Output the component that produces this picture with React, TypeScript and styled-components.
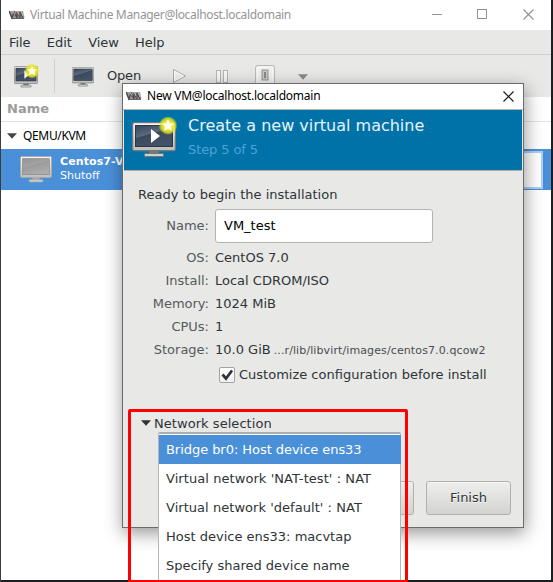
import React from 'react';
import styled, { createGlobalStyle } from 'styled-components';

const Global = createGlobalStyle`
  * { box-sizing: border-box; }
  html, body { margin: 0; padding: 0; overflow: hidden; }
  body { font-family: 'DejaVu Sans', sans-serif; font-size: 13px; color: #2e3436; }
  svg { display: block; flex: none; }
`;

const Desktop = styled.div`
  position: relative;
  width: 553px;
  height: 582px;
  overflow: hidden;
  background: #1c1d20;
  border-left: 1px solid #3b3b40;
  padding: 0 2px 2px 0;
`;

const MainWindow = styled.div`
  height: 580px;
  overflow: hidden;
  background: #fff;
  display: flex;
  flex-direction: column;
`;

const TitleBar = styled.div`
  height: 30px;
  flex: none;
  display: flex;
  align-items: center;
  padding-left: 8px;
  background: #fff;
`;

const Caption = styled.span<{ $color: string; $track: number }>`
  font: 12px/18px 'Noto Sans', sans-serif;
  letter-spacing: ${p => p.$track}px;
  color: ${p => p.$color};
  margin-left: 5px;
  white-space: nowrap;
`;

const WindowControls = styled.div`
  margin-left: auto;
  display: flex;
  gap: 35px;
  padding: 0 17px 2px 0;
`;

const MenuBar = styled.div`
  height: 25px;
  flex: none;
  display: flex;
  gap: 16.3px;
  padding-left: 8px;
  line-height: 25px;
  background: #e8e8e7;
  border-bottom: 1px solid #cfcfcd;
`;

const MenuItem = styled.span`
  letter-spacing: -0.05px;
`;

const ToolBar = styled.div`
  height: 42px;
  flex: none;
  display: flex;
  align-items: flex-start;
  padding-left: 13px;
  background: #e8e8e7;
`;

const ToolSlot = styled.div<{ $left: number; $top: number }>`
  margin-left: ${p => p.$left}px;
  padding-top: ${p => p.$top}px;
`;

const Divider = styled.div`
  width: 1px;
  height: 34px;
  margin: 4px 0 0 14px;
  background: #cdcdcb;
`;

const OpenLabel = styled.span`
  margin-left: 13px;
  line-height: 41px;
  letter-spacing: -0.2px;
`;

const ListHeader = styled.div`
  height: 25px;
  flex: none;
  padding-left: 6px;
  font-weight: bold;
  line-height: 23px;
  color: #9b9b9b;
  border-bottom: 1px solid #e2e2e2;
`;

const GroupRow = styled.div`
  height: 27px;
  flex: none;
  display: flex;
  align-items: center;
  gap: 6px;
  padding-left: 6px;
  color: #000;
  font: 12px/18px 'Noto Sans', sans-serif;
  letter-spacing: -0.35px;
`;

const VmRow = styled.div`
  height: 41px;
  flex: none;
  display: flex;
  align-items: center;
  padding-left: 19px;
  background: #4a90d9;
  color: #fff;
  font-size: 11px;
  line-height: 14px;
`;

const VmText = styled.div`
  margin: -1px 0 0 8px;
`;

const VmName = styled.div`
  font-weight: bold;
  letter-spacing: 0.1px;
`;

const Graph = styled.div`
  margin-left: auto;
  margin-right: 8px;
  width: 120px;
  height: 38px;
  background: #fff;
  border: 2px solid #b0cdee;
`;

const Dialog = styled.div`
  position: absolute;
  left: 121px;
  top: 83px;
  width: 402px;
  height: 445px;
  border: 1px solid #6b6b6b;
  background: #e8e8e7;
  box-shadow: 1px 5px 17px rgba(0, 0, 0, 0.42);
  display: flex;
  flex-direction: column;
`;

const DialogTitle = styled.div`
  height: 26px;
  flex: none;
  display: flex;
  align-items: center;
  padding: 0 9px 1px 3px;
  background: #fff;
  border-bottom: 1px solid #b5b5b5;
`;

const CloseSlot = styled.div`
  margin-left: auto;
`;

const Banner = styled.div`
  height: 61px;
  flex: none;
  margin: 0 1px;
  display: flex;
  padding-left: 8px;
  background: #0072a8;
  border-bottom: 1px solid #b0aeab;
`;

const BannerIcon = styled.div`
  padding-top: 6px;
`;

const BannerText = styled.div`
  margin-left: 10px;
  padding-top: 3px;
`;

const BannerHeading = styled.div`
  font-size: 16px;
  line-height: 25px;
  color: #e6f2f8;
`;

const BannerStep = styled.div`
  font-size: 13px;
  line-height: 24px;
  letter-spacing: -0.1px;
  color: #4ba3d6;
`;

const Intro = styled.div`
  margin: 14px 0 2px 15px;
  line-height: 20px;
`;

const Form = styled.div`
  display: grid;
  grid-template-columns: 86px 1fr;
  grid-template-rows: 37px repeat(5, 23px);
  column-gap: 6px;
  align-items: center;
`;

const Label = styled.div<{ $lift?: boolean }>`
  text-align: right;
  color: #555a5a;
  padding-top: ${p => (p.$lift ? 0 : 3)}px;
`;

const Value = styled.div`
  white-space: nowrap;
  padding-top: 3px;
`;

const NameField = styled.div`
  width: 218px;
  height: 34px;
  border: 1px solid #b4b4ae;
  border-radius: 3px;
  background: #fff;
  padding-left: 8px;
  line-height: 32px;
  color: #000;
`;

const Path = styled.span`
  margin-left: 3px;
  font-size: 11px;
  letter-spacing: 0.11px;
  color: #484e50;
`;

const CheckRow = styled.div`
  display: flex;
  align-items: center;
  gap: 4px;
  height: 25px;
  margin: 3px 0 0 96px;
`;

const Check = styled.div`
  width: 16px;
  height: 16px;
  border: 1px solid #a3a39f;
  border-radius: 2px;
  background: linear-gradient(#fff, #f0f0f0);
`;

const Expander = styled.div`
  display: flex;
  align-items: center;
  gap: 3px;
  height: 20px;
  margin: 26px 0 0 18px;
  letter-spacing: 0.05px;
`;

const ButtonRow = styled.div`
  display: flex;
  justify-content: flex-end;
  gap: 12px;
  margin-top: auto;
  padding: 0 12px 12px 0;
`;

const Button = styled.div`
  width: 85px;
  height: 34px;
  border: 1px solid #b0b0ac;
  border-radius: 3px;
  background: linear-gradient(#eeeeed, #d3d3d1);
  box-shadow: inset 0 1px #f7f7f7;
  text-align: center;
  line-height: 32px;
  text-shadow: 0 1px #fff;
`;

const Popup = styled.div`
  position: absolute;
  left: 157px;
  top: 432px;
  width: 243px;
  height: 149px;
  background: #fff;
  border: 1px solid #b5b5b5;
  border-top: 2px solid #adadad;
  border-bottom: 0;
  border-radius: 2px 2px 0 0;
  padding-top: 1px;
`;

const Option = styled.div<{ $active?: boolean; $track?: number }>`
  height: 29px;
  margin-right: -1px;
  padding-left: 7px;
  line-height: 29px;
  white-space: nowrap;
  letter-spacing: ${p => p.$track ?? 0}px;
  color: ${p => (p.$active ? '#fff' : '#2e3436')};
  background: ${p => (p.$active ? '#4a90d9' : 'transparent')};
`;

const Highlight = styled.div`
  position: absolute;
  left: 127px;
  top: 409px;
  width: 280px;
  height: 174px;
  border: 3px solid #f00;
  border-radius: 2px;
`;

const AppLogo = () => (
  <svg width="16" height="10" viewBox="0 0 16 10">
    <path d="M0 1h14l1.5 7H2z" fill="#9a9a9a" />
    <path d="M0 1l3 7 2-6 3 6V2l3 6V2l3 6" fill="none" stroke="#484848" strokeWidth="1.3" />
    <path d="M4 1l2 4M8 1l2 4M12 1l2 5" stroke="#c5c5c5" strokeWidth="1" />
    <path d="M2 8.5h13" stroke="#666" />
    <path d="M5 4l1 2M10 5l1 2" stroke="#a25f60" />
  </svg>
);

const Cross = ({ color }: { color: string }) => (
  <svg width="11" height="11" viewBox="0 0 11 11">
    <path d="M.5.5l10 10M10.5.5l-10 10" stroke={color} strokeWidth="1.1" />
  </svg>
);

const Triangle = ({ color, width = 10 }: { color: string; width?: number }) => (
  <svg width={width} height="6" viewBox="0 0 10 6">
    <path d="M0 .3h10L5 5.7z" fill={color} />
  </svg>
);

type MonitorProps = {
  width: number;
  height: number;
  id: string;
  off?: boolean;
  play?: boolean;
};

const Monitor = ({ width, height, id, off, play }: MonitorProps) => (
  <svg width={width} height={height} viewBox="0 0 44 36" preserveAspectRatio="none">
    <defs>
      <linearGradient id={id + 's'} x2=".5" y2="1">
        <stop stopColor={off ? '#959595' : '#35445b'} />
        <stop offset=".46" stopColor={off ? '#a3a3a3' : '#5b697c'} />
        <stop offset=".5" stopColor={off ? '#9b9b9b' : '#3c495d'} />
        <stop offset="1" stopColor={off ? '#acacac' : '#435166'} />
      </linearGradient>
      <linearGradient id={id + 'f'} x2="0" y2="1">
        <stop stopColor="#fbfbfb" />
        <stop offset="1" stopColor="#bcbcb9" />
      </linearGradient>
    </defs>
    <path d="M17 28h10v4H17z" fill={off ? '#aaa' : '#777a78'} />
    <rect x="12.5" y="31.5" width="19" height="3" rx="1" fill="#d0d0ce" stroke={off ? '#aaa' : '#747674'} />
    <rect x=".7" y=".7" width="42.6" height="28" rx="1.5" fill={`url(#${id}f)`} stroke={off ? '#aaa9a5' : '#777a78'} strokeWidth="1.2" />
    <rect x="3.5" y="3.5" width="37" height="21" fill={`url(#${id}s)`} stroke={off ? '#8c8c8c' : '#2c3541'} />
    {play && <path d="M19 7v14l9-7z" fill="#fff" />}
  </svg>
);

const NewMonitor = ({ id, big }: { id: string; big?: boolean }) => (
  <svg width={big ? 46 : 26} height={big ? 42 : 25} viewBox={big ? '0 0 46 42' : '0 0 26 25'}>
    <defs>
      <radialGradient id={id + 'g'}>
        <stop offset=".4" stopColor="#f6ed3c" />
        <stop offset=".75" stopColor="#e9e619" stopOpacity=".8" />
        <stop offset="1" stopColor="#e0e800" stopOpacity="0" />
      </radialGradient>
    </defs>
    <svg x="0" y={big ? 6 : 3} width={big ? 44 : 24} height={big ? 36 : 22}>
      <Monitor id={id} width={big ? 44 : 24} height={big ? 36 : 22} play />
    </svg>
    <g transform={big ? 'translate(36 9.6)' : 'translate(18 8) scale(.8)'}>
      <circle r="9.5" fill={`url(#${id}g)`} />
      <path d="M0-6.5L1.8-2.2 6.3-2 2.8 1 4 5.5 0 3-4 5.5-2.8 1-6.3-2-1.8-2.2z" fill="#fffff5" />
    </g>
  </svg>
);

const PlayIcon = () => (
  <svg width="15" height="16" viewBox="0 0 15 16">
    <path d="M1.5 1.5v13l12-6.5z" fill="#ededec" stroke="#a9a9a7" />
    <path d="M2.5 3.2v9.6L11.5 8z" fill="none" stroke="#fff" />
  </svg>
);

const PauseIcon = () => (
  <svg width="13" height="13" viewBox="0 0 13 13">
    <g fill="#f7f7f6" stroke="#b5b5b3">
      <rect x=".5" y=".5" width="4" height="12" />
      <rect x="7.5" y=".5" width="4" height="12" />
    </g>
  </svg>
);

const PowerIcon = () => (
  <svg width="20" height="20" viewBox="0 0 20 20">
    <rect x=".5" y=".5" width="19" height="19" rx="2" fill="#e3e3e2" stroke="#b9b9b7" />
    <rect x="2" y="2" width="16" height="17" rx="1" fill="#f0f0ef" stroke="#fff" />
    <rect x="7" y="5" width="6" height="10" fill="#c9c9c7" stroke="#929290" />
    <rect x="9" y="7" width="2" height="6" fill="#888" />
  </svg>
);

const details: [string, string][] = [
  ['OS:', 'CentOS 7.0'],
  ['Install:', 'Local CDROM/ISO'],
  ['Memory:', '1024 MiB'],
  ['CPUs:', '1'],
];

export default function App() {
  return (
    <>
      <Global />
      <Desktop>
        <MainWindow>
          <TitleBar>
            <AppLogo />
            <Caption $color="#949494" $track={-0.33}>Virtual Machine Manager@localhost.localdomain</Caption>
            <WindowControls>
              <svg width="10" height="11" viewBox="0 0 10 11"><path d="M0 5.5h10" stroke="#929292" /></svg>
              <svg width="11" height="11" viewBox="0 0 11 11"><rect x=".5" y=".5" width="9" height="9" fill="none" stroke="#929292" /></svg>
              <Cross color="#929292" />
            </WindowControls>
          </TitleBar>
          <MenuBar>
            <MenuItem>File</MenuItem>
            <MenuItem>Edit</MenuItem>
            <MenuItem>View</MenuItem>
            <MenuItem>Help</MenuItem>
          </MenuBar>
          <ToolBar>
            <ToolSlot $left={0} $top={8}><NewMonitor id="new" /></ToolSlot>
            <Divider />
            <ToolSlot $left={17} $top={12}><Monitor id="open" width={22} height={20} /></ToolSlot>
            <OpenLabel>Open</OpenLabel>
            <ToolSlot $left={31} $top={13}><PlayIcon /></ToolSlot>
            <ToolSlot $left={29} $top={15}><PauseIcon /></ToolSlot>
            <ToolSlot $left={26} $top={10}><PowerIcon /></ToolSlot>
            <ToolSlot $left={23} $top={19}><Triangle color="#888a89" /></ToolSlot>
          </ToolBar>
          <ListHeader>Name</ListHeader>
          <GroupRow><Triangle color="#464646" />QEMU/KVM</GroupRow>
          <VmRow>
            <Monitor id="vm" off width={32} height={27} />
            <VmText>
              <VmName>Centos7-VM</VmName>
              <div>Shutoff</div>
            </VmText>
            <Graph />
          </VmRow>
        </MainWindow>

        <Dialog>
          <DialogTitle>
            <AppLogo />
            <Caption $color="#000" $track={-0.24}>New VM@localhost.localdomain</Caption>
            <CloseSlot><Cross color="#111" /></CloseSlot>
          </DialogTitle>
          <Banner>
            <BannerIcon><NewMonitor id="banner" big /></BannerIcon>
            <BannerText>
              <BannerHeading>Create a new virtual machine</BannerHeading>
              <BannerStep>Step 5 of 5</BannerStep>
            </BannerText>
          </Banner>
          <Intro>Ready to begin the installation</Intro>
          <Form>
            <Label $lift>Name:</Label>
            <NameField>VM_test</NameField>
            {details.map(([label, value]) => (
              <React.Fragment key={label}>
                <Label>{label}</Label>
                <Value>{value}</Value>
              </React.Fragment>
            ))}
            <Label>Storage:</Label>
            <Value>10.0 GiB<Path>...r/lib/libvirt/images/centos7.0.qcow2</Path></Value>
          </Form>
          <CheckRow>
            <Check>
              <svg width="14" height="14" viewBox="0 0 14 14"><path d="M2.5 6.5l3.5 4 6-8" fill="none" stroke="#2e3436" strokeWidth="2.7" /></svg>
            </Check>
            Customize configuration before install
          </CheckRow>
          <Expander><Triangle color="#2e3436" />Network selection</Expander>
          <ButtonRow>
            <Button />
            <Button>Finish</Button>
          </ButtonRow>
        </Dialog>

        <Popup>
          <Option $active $track={-0.05}>Bridge br0: Host device ens33</Option>
          <Option $track={0.07}>Virtual network 'NAT-test' : NAT</Option>
          <Option $track={0.04}>Virtual network 'default' : NAT</Option>
          <Option>Host device ens33: macvtap</Option>
          <Option>Specify shared device name</Option>
        </Popup>
        <Highlight />
      </Desktop>
    </>
  );
}
